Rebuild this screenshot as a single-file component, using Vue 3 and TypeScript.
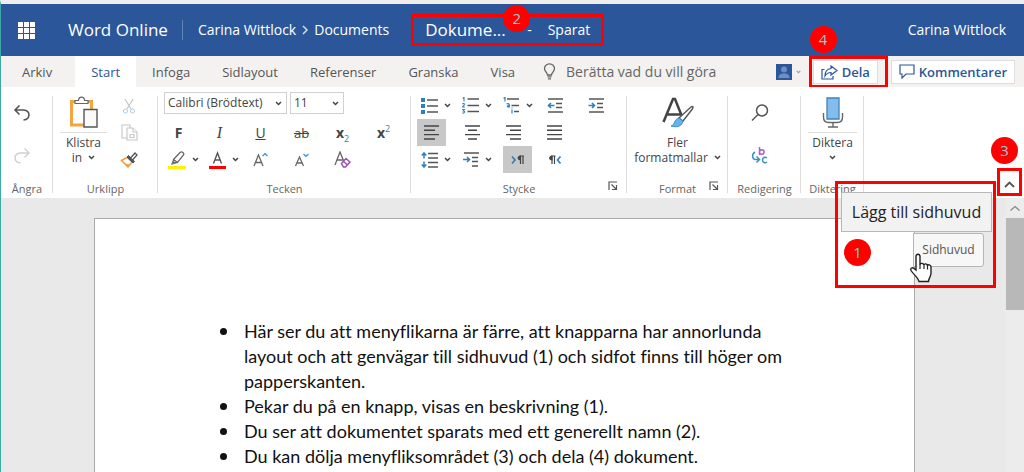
<script setup lang="ts">
import { ref } from 'vue'

const tabs: string[] = ['Start', 'Infoga', 'Sidlayout', 'Referenser', 'Granska', 'Visa']
const activeTab = ref('Start')
const font = ref('Calibri (Brödtext)')
const size = ref('11')
const query = ref('')

const waffle: number[] = [0, 6, 12]

const notes: string[][] = [
  [
    'Här ser du att menyflikarna är färre, att knapparna har annorlunda',
    'layout och att genvägar till sidhuvud (1) och sidfot finns till höger om',
    'papperskanten.',
  ],
  ['Pekar du på en knapp, visas en beskrivning (1).'],
  ['Du ser att dokumentet sparats med ett generellt namn (2).'],
  ['Du kan dölja menyfliksområdet (3) och dela (4) dokument.'],
]
</script>

<template>
  <div class="app">
    <svg class="defs" aria-hidden="true">
      <symbol id="caret" viewBox="0 0 7 5"><path d="M1 1l2.5 2.5L6 1" fill="none" stroke="#444" stroke-width="1.5" /></symbol>
      <symbol id="launcher" viewBox="0 0 10 10">
        <path d="M1 9V1h8M3.500 3.500l5 5M8.500 4v4.500H4" fill="none" stroke="#555" stroke-width="1.200" />
      </symbol>
    </svg>

    <header class="titlebar">
      <button class="waffle" aria-label="Appstartare">
        <svg width="17" height="17" viewBox="0 0 17 17" fill="#fff">
          <template v-for="y in waffle" :key="y">
            <rect v-for="x in waffle" :key="x" :x="x" :y="y" width="5" height="5" />
          </template>
        </svg>
      </button>
      <span class="brand">Word Online</span>
      <nav class="crumbs">
        <a href="#">Carina Wittlock</a>
        <svg width="6" height="10" viewBox="0 0 6 10"><path d="M1 1l4 4-4 4" fill="none" stroke="#d5deed" stroke-width="1.500" /></svg>
        <a href="#">Documents</a>
      </nav>
      <div class="docname">
        <span class="name">Dokume...</span>
        <span class="dash">-</span>
        <span>Sparat</span>
        <span class="badge b2">2</span>
      </div>
      <a href="#" class="user">Carina Wittlock</a>
    </header>

    <div class="tabs">
      <button class="tab file">Arkiv</button>
      <button
        v-for="t in tabs"
        :key="t"
        class="tab"
        :class="{ active: t === activeTab }"
        @click="activeTab = t"
      >{{ t }}</button>
      <label class="tell">
        <svg width="13" height="17" viewBox="0 0 13 17" fill="none" stroke="#666" stroke-width="1.300">
          <path d="M4.500 12C4.500 9.500 1.500 8.500 1.500 5.500a5 4.700 0 0 1 10 0C11.500 8.500 8.500 9.500 8.500 12z" />
          <path d="M4.500 13.800h4M5 15.800h3" />
        </svg>
        <input v-model="query" type="text" placeholder="Berätta vad du vill göra" aria-label="Berätta vad du vill göra" />
      </label>
      <button class="avatar" aria-label="Deltagare">
        <svg width="16" height="16" viewBox="0 0 16 16">
          <path fill="#2b579a" d="M0 0h16v16H0z" />
          <circle cx="8" cy="5.500" r="3" fill="#6d8ec2" />
          <path d="M2.500 14c0-3 1.500-4.500 5.500-4.500s5.500 1.500 5.500 4.500z" fill="#6d8ec2" />
        </svg>
        <svg class="caret pale" width="5" height="4"><use href="#caret" /></svg>
      </button>
      <div class="share">
        <button class="action">
          <svg width="17" height="15" viewBox="0 0 17 15" fill="none" stroke="#2b579a" stroke-width="1.200">
            <path d="M3.500 4.500H1v9.500h11v-3" />
            <path d="M10 1l6 4.500-6 4.500V7.500C7 7.500 5.500 8.500 4 11c0-4 2-7 6-7.500z" />
          </svg>
          Dela
        </button>
        <span class="badge b4">4</span>
      </div>
      <button class="action comments">
        <svg width="16" height="15" viewBox="0 0 16 15" fill="none" stroke="#2b579a" stroke-width="1.200">
          <path d="M1 1h14v9H7l-4 4v-4H1z" />
        </svg>
        Kommentarer
      </button>
    </div>

    <div class="ribbon">
      <section class="group undo">
        <div class="body stack">
          <button aria-label="Ångra">
            <svg width="18" height="18" viewBox="0 0 18 18" fill="none" stroke="#555" stroke-width="1.600"><path d="M6.500 1.500L2 6l4.500 4.500M2 6h8.500C18 6.500 17.500 15.500 10.500 16" /></svg>
          </button>
          <button aria-label="Gör om" disabled>
            <svg width="18" height="18" viewBox="0 0 18 18" fill="none" stroke="#cfcfcf" stroke-width="1.400"><path d="M11.500 1.500L16 6l-4.500 4.500M16 6H7.500C0 6.500.5 15.500 7.500 16" /></svg>
          </button>
        </div>
        <h2>Ångra</h2>
      </section>

      <section class="group clip">
        <div class="body">
          <button class="big">
            <svg width="30" height="33" viewBox="0 0 30 33" fill="none">
              <path d="M2.500 5.500h20V29h-20z" fill="#fff" stroke="#f2a63d" stroke-width="3" />
              <path d="M6 7.500V4.500h3.500C9.500 0 15.500 0 15.500 4.500H19v3z" fill="#fff" stroke="#666" stroke-width="1.200" />
              <path d="M15 13.500h13V31H15z" fill="#fafafa" stroke="#555" stroke-width="1.400" />
            </svg>
            <span class="ruled">Klistra</span>
            <span>in <svg class="caret" width="7" height="5"><use href="#caret" /></svg></span>
          </button>
          <div class="side">
            <button aria-label="Klipp ut" disabled>
              <svg width="14" height="16" viewBox="0 0 14 16" fill="none">
                <path d="M3 1l6 10M11 1L5 11" stroke="#c8c8c8" stroke-width="1.300" />
                <circle cx="3.500" cy="13" r="2" stroke="#a9cbea" /><circle cx="10.500" cy="13" r="2" stroke="#a9cbea" />
              </svg>
            </button>
            <button aria-label="Kopiera" disabled>
              <svg width="17" height="17" viewBox="0 0 17 17" fill="#fff" stroke="#c6c6c6" stroke-width="1.100">
                <path d="M1 1h8v13H1z" /><path d="M6 4h6l4 4v8H6z" /><path d="M12 4v4h4M9 10.500h4v3H9z" />
              </svg>
            </button>
            <button aria-label="Hämta format">
              <svg width="18" height="16" viewBox="0 0 18 16" fill="none">
                <path d="M1.500 8.500l6.500 6.500 4-5-5-4.500z" fill="#fff" stroke="#eda03c" stroke-width="1.500" />
                <path d="M3.500 10.500l4.500 4.500 2-2.500-3.500-.5z" fill="#eda03c" />
                <path d="M7 5l1.500-1.500 6 6L13 11z" fill="#555" stroke="#555" />
                <path d="M10.500 6L15 1l2 2-4.500 5z" fill="#fff" stroke="#555" stroke-width="1.300" />
              </svg>
            </button>
          </div>
        </div>
        <h2>Urklipp</h2>
      </section>

      <section class="group font">
        <div class="body grid">
          <div class="selects">
            <label class="pick face">
              <select v-model="font" aria-label="Teckensnitt"><option>Calibri (Brödtext)</option><option>Arial</option></select>
              <svg class="caret" width="7" height="5"><use href="#caret" /></svg>
            </label>
            <label class="pick">
              <select v-model="size" aria-label="Teckenstorlek"><option>11</option><option>12</option></select>
              <svg class="caret" width="7" height="5"><use href="#caret" /></svg>
            </label>
          </div>
          <button class="cell ltr"><b>F</b></button>
          <button class="cell ltr serif"><i>I</i></button>
          <button class="cell ltr"><u>U</u></button>
          <button class="cell ltr strike"><s>ab</s></button>
          <button class="cell ltr"><span><b>x</b><sub>2</sub></span></button>
          <button class="cell ltr"><span><b>x</b><sup>2</sup></span></button>
          <button class="cell" aria-label="Överstrykning">
            <svg width="18" height="18" viewBox="0 0 18 18" fill="none">
              <path d="M0 15h18v3H0z" fill="#fff200" />
              <path d="M5.500 8.500L12 1.500c2-1.500 4.500.5 3.500 2.500L9.500 11.500l-4 .5zM5.500 8.500l4 3" stroke="#666" stroke-width="1.300" />
              <path d="M4.500 9.500l3.500 3-5 1.500z" fill="#777" />
            </svg>
            <svg class="caret" width="7" height="5"><use href="#caret" /></svg>
          </button>
          <button class="cell" aria-label="Teckenfärg">
            <svg width="17" height="18" viewBox="0 0 17 18" fill="none">
              <path d="M0 15h17v3H0z" fill="#f00" />
              <path d="M4.500 12.500L8.500 2l4 10.500M6 9h5" stroke="#555" stroke-width="1.400" />
            </svg>
            <svg class="caret" width="7" height="5"><use href="#caret" /></svg>
          </button>
          <button class="cell" aria-label="Öka teckenstorlek">
            <svg width="15" height="16" viewBox="0 0 15 16" fill="none">
              <path d="M1 14L5.500 3l4.500 11M2.500 10.500h6" stroke="#666" stroke-width="1.300" />
              <path d="M9.500 4L12 1.800 14.500 4" stroke="#4a93cc" stroke-width="1.400" />
            </svg>
          </button>
          <button class="cell" aria-label="Minska teckenstorlek">
            <svg width="15" height="16" viewBox="0 0 15 16" fill="none">
              <path d="M1.500 14L5.500 5l4 9M3 11h5" stroke="#666" stroke-width="1.300" />
              <path d="M9.500 2L12 4.200 14.500 2" stroke="#4a93cc" stroke-width="1.400" />
            </svg>
          </button>
          <button class="cell" aria-label="Ta bort formatering">
            <svg width="17" height="17" viewBox="0 0 17 17" fill="none">
              <path d="M1 14L6 1l4.500 11M3 9h6" stroke="#666" stroke-width="1.300" />
              <path d="M7.500 12.500l4.500-5 4 3.500-4.500 5H9.500zM9.500 10.500l4 3.500" fill="#fff" stroke="#9a4fb5" stroke-width="1.500" />
            </svg>
          </button>
        </div>
        <h2>Tecken</h2>
      </section>

      <section class="group para">
        <div class="body grid">
          <button class="cell" aria-label="Punktlista">
            <svg width="17" height="16" viewBox="0 0 17 16">
              <path d="M0 0h4v4H0zM0 6h4v4H0zM0 12h4v4H0z" fill="#2e7fc1" />
              <path d="M6 2h11M6 8h11M6 14h11" stroke="#555" stroke-width="1.500" />
            </svg>
            <svg class="caret" width="7" height="5"><use href="#caret" /></svg>
          </button>
          <button class="cell" aria-label="Numrering">
            <svg width="17" height="17" viewBox="0 0 17 17" fill="none">
              <path d="M.8 1.200L2 .5v4M.3 7c1-1 2.500-.5 2 .8L.5 10h2.300M.3 12.500h2L1.300 14c2 0 1.500 2.500-1 2" stroke="#2e7fc1" stroke-width="1.100" />
              <path d="M5.500 2H17M5.500 8.500H17M5.500 14.500H17" stroke="#555" stroke-width="1.500" />
            </svg>
            <svg class="caret" width="7" height="5"><use href="#caret" /></svg>
          </button>
          <button class="cell" aria-label="Lista med flera nivåer">
            <svg width="17" height="17" viewBox="0 0 17 17" fill="none">
              <path d="M.5 1.200L2 .5v4M3.500 7c2.500-1 3 0 3 3-3 0-3-1.500 0-1.500M9 12.500v4M9 10.500v1" stroke="#2e7fc1" stroke-width="1.200" />
              <path d="M4 2h12M8.500 8.500H16M11 14.500h5" stroke="#555" stroke-width="1.500" />
            </svg>
            <svg class="caret" width="7" height="5"><use href="#caret" /></svg>
          </button>
          <button class="cell" aria-label="Minska indrag">
            <svg width="16" height="15" viewBox="0 0 16 15" fill="none">
              <path d="M1 1h15M9 5.500h6M9 9.500h6M1 14h15" stroke="#555" stroke-width="1.400" />
              <path d="M7.500 7.500H1.500M4 5L1.500 7.500 4 10" stroke="#2e7fc1" stroke-width="1.600" />
            </svg>
          </button>
          <button class="cell" aria-label="Öka indrag">
            <svg width="16" height="15" viewBox="0 0 16 15" fill="none">
              <path d="M1 1h15M9 5.500h6M9 9.500h6M1 14h15" stroke="#555" stroke-width="1.400" />
              <path d="M.5 7.500h6M4 5l2.500 2.500L4 10" stroke="#2e7fc1" stroke-width="1.600" />
            </svg>
          </button>
          <button class="cell first on" aria-label="Vänsterjustera" aria-pressed="true">
            <svg width="15" height="15" viewBox="0 0 15 15"><path d="M0 1h15M0 5.300h11M0 9.600h15M0 14h11" stroke="#444" stroke-width="1.400" /></svg>
          </button>
          <button class="cell" aria-label="Centrera">
            <svg width="15" height="15" viewBox="0 0 15 15"><path d="M0 1h15M3 5.300h9M0 9.600h15M3 14h9" stroke="#444" stroke-width="1.400" /></svg>
          </button>
          <button class="cell" aria-label="Högerjustera">
            <svg width="15" height="15" viewBox="0 0 15 15"><path d="M0 1h15M4 5.300h11M0 9.600h15M4 14h11" stroke="#444" stroke-width="1.400" /></svg>
          </button>
          <button class="cell" aria-label="Marginaljustera">
            <svg width="15" height="15" viewBox="0 0 15 15"><path d="M0 1h15M0 5.300h15M0 9.600h15M0 14h15" stroke="#444" stroke-width="1.400" /></svg>
          </button>
          <button class="cell first" aria-label="Radavstånd">
            <svg width="17" height="16" viewBox="0 0 17 16" fill="none">
              <path d="M7 1.500h10M7 6h10M7 10.500h10M7 15h10" stroke="#555" stroke-width="1.400" />
              <path d="M3 6.500V1M.7 3.500L3 1l2.300 2.500M3 9.500V15M.7 12.500L3 15l2.300-2.500" stroke="#2e7fc1" stroke-width="1.500" />
            </svg>
            <svg class="caret" width="7" height="5"><use href="#caret" /></svg>
          </button>
          <button class="cell" aria-label="Specialindrag">
            <svg width="16" height="15" viewBox="0 0 16 15" fill="none">
              <path d="M1 1h15M9 5.500h6M9 9.500h6M9 14h6" stroke="#555" stroke-width="1.400" />
              <path d="M0 7.500h6.500M4 5l2.500 2.500L4 10" stroke="#2e7fc1" stroke-width="1.600" />
            </svg>
            <svg class="caret" width="7" height="5"><use href="#caret" /></svg>
          </button>
          <button class="cell on ltrdir" aria-label="Vänster till höger" aria-pressed="true">
            <svg width="14" height="10" viewBox="0 0 14 10" fill="none">
              <path d="M1 1.500L4 5 1 8.500" stroke="#2e7fc1" stroke-width="1.700" />
              <path d="M9.500 1v8M12 1v8M8.500 1H13" stroke="#444" stroke-width="1.200" /><path d="M10 .5v5C5.500 5.500 5.500.5 10 .5z" fill="#444" />
            </svg>
          </button>
          <button class="cell" aria-label="Höger till vänster">
            <svg width="14" height="10" viewBox="0 0 14 10" fill="none">
              <path d="M12.500 1.500L9.500 5l3 3.500" stroke="#2e7fc1" stroke-width="1.700" />
              <path d="M4 1v8M6.500 1v8M3 1h4.500" stroke="#444" stroke-width="1.200" /><path d="M4.500.5v5C0 5.500 0 .5 4.500.5z" fill="#444" />
            </svg>
          </button>
        </div>
        <h2>Stycke</h2>
        <button class="launch" aria-label="Styckeinställningar"><svg width="10" height="10"><use href="#launcher" /></svg></button>
      </section>

      <section class="group style">
        <div class="body">
          <button class="big">
            <svg width="32" height="31" viewBox="0 0 32 31" fill="none">
              <path d="M1.500 25L11 2h2l8 20M5 17.500h13" stroke="#444" stroke-width="2.500" />
              <path d="M29 10c2.500-1.500 2.500.5 1 2.500L21 24l-4-3z" fill="#fff" stroke="#555" stroke-width="1.400" />
              <path d="M17 21l4 3c-1 6-7 6.500-12 5 4-1 3-7 8-8z" fill="#67b3e8" stroke="#3b8fcb" />
            </svg>
            <span>Fler</span>
            <span>formatmallar <svg class="caret" width="7" height="5"><use href="#caret" /></svg></span>
          </button>
        </div>
        <h2>Format</h2>
        <button class="launch" aria-label="Formatmallar"><svg width="10" height="10"><use href="#launcher" /></svg></button>
      </section>

      <section class="group edit">
        <div class="body stack">
          <button aria-label="Sök">
            <svg width="18" height="18" viewBox="0 0 18 18" fill="none" stroke="#555" stroke-width="1.500"><circle cx="11" cy="6.500" r="5.500" /><path d="M7 10.500L1 16.500" /></svg>
          </button>
          <button aria-label="Ersätt">
            <svg width="18" height="18" viewBox="0 0 18 18" fill="none">
              <path d="M8.500 0v8M8.500 5c0-3 4.500-3 4.500 0s-4.500 3-4.500 0" stroke="#b35cc4" stroke-width="1.500" />
              <path d="M16 11c-2-1.500-4.500-.5-4.500 2s2.500 3.500 4.500 2" stroke="#3b8fcb" stroke-width="1.500" />
              <path d="M4 5C.5 7 1 12.500 4.500 12.500H8M5.500 9.500l3 3-3 3" stroke="#3b8fcb" stroke-width="1.500" />
            </svg>
          </button>
        </div>
        <h2>Redigering</h2>
      </section>

      <section class="group dictate">
        <div class="body">
          <button class="big">
            <svg width="22" height="31" viewBox="0 0 22 31" fill="none">
              <path d="M1.500 16v4c0 4 2 5.500 5 5.500h9c3 0 5-1.500 5-5.500v-4M11 25.500V30M6 30h10" stroke="#666" stroke-width="1.400" />
              <path d="M5 1h12v21H5z" fill="#83bdec" stroke="#3f83bd" stroke-width="1.300" />
            </svg>
            <span class="ruled">Diktera</span>
            <span><svg class="caret" width="7" height="5"><use href="#caret" /></svg></span>
          </button>
        </div>
        <h2>Diktering</h2>
      </section>

      <div class="collapse">
        <button aria-label="Dölj menyfliksområdet">
          <svg width="11" height="7" viewBox="0 0 11 7"><path d="M1 6l4.500-4.500L10 6" fill="none" stroke="#555" stroke-width="1.800" /></svg>
        </button>
        <span class="badge b3">3</span>
      </div>
    </div>

    <div class="workspace">
      <main class="canvas">
        <article class="paper">
          <ul>
            <li v-for="(lines, i) in notes" :key="i">
              <template v-for="(line, n) in lines" :key="n"><br v-if="n > 0" />{{ line }}</template>
            </li>
          </ul>
        </article>
        <button class="headerlink">Sidhuvud</button>
        <div class="callout">
          <div class="tip" role="tooltip">Lägg till sidhuvud</div>
          <span class="badge b1">1</span>
        </div>
        <svg class="hand" width="24" height="30" viewBox="0 0 24 30">
          <path d="M7 17V3.500C7 .5 11 .5 11 3.500V12c0-2.500 4-2 4 .5 0-2.500 3.500-2 3.500.5 0-2 3.500-1.500 3.500 1V20c0 4-2.500 5-2.500 8.500H10C9.500 25 4 21 2 17.500 1 15 3.500 14 5 15.500z" fill="#fff" stroke="#222" stroke-width="1.400" />
          <path d="M11 12v4M15 12.500V16M18.500 13v3.500" stroke="#222" stroke-width="1.200" />
        </svg>
      </main>
      <div class="scroll">
        <button aria-label="Rulla upp"><svg width="10" height="6" viewBox="0 0 10 6"><path d="M.5 5.500l4.500-4 4.500 4" fill="none" stroke="#888" stroke-width="1.200" /></svg></button>
        <div class="thumb"></div>
      </div>
    </div>
  </div>
</template>

<style>
html, body, #app { height: 100%; }
body { margin: 0; overflow: hidden; }
</style>

<style scoped>
* { box-sizing: border-box; }
.app {
  display: flex;
  flex-direction: column;
  height: 100%;
  border-left: 1px solid #3fa9a5;
  border-top: 4px solid #f0eeec;
  background: #fff;
  color: #444;
  font: 13px/20px "Open Sans", "Noto Sans", sans-serif;
}
.defs { position: absolute; width: 0; height: 0; }
svg { display: block; flex: none; }
button {
  display: flex;
  align-items: center;
  justify-content: center;
  margin: 0;
  padding: 0;
  border: 0;
  background: none;
  color: inherit;
  font: inherit;
}
a { color: inherit; text-decoration: none; }

.titlebar {
  display: flex;
  align-items: center;
  flex: none;
  height: 52px;
  padding: 0 18px 0 17px;
  background: #2b579a;
  color: #fff;
  font-size: 14px;
}
.waffle { margin-right: 33px; }
.brand { padding-right: 14px; border-right: 1px solid #6283b6; font-size: 17px; white-space: nowrap; }
.crumbs { display: flex; align-items: center; gap: 6px; padding: 0 22px 0 15px; white-space: nowrap; }
.docname {
  position: relative;
  display: flex;
  align-items: center;
  width: 193px;
  height: 32px;
  padding: 0 11px;
  border: 3px solid #f00;
  white-space: nowrap;
}
.docname .name { font-size: 17px; }
.docname .dash { margin: 0 16px 0 auto; }
.user { margin-left: auto; white-space: nowrap; }

.badge {
  position: absolute;
  width: 27px;
  height: 27px;
  border-radius: 50%;
  background: #f00;
  color: #8ccfca;
  font-size: 15px;
  line-height: 27px;
  text-align: center;
}
.b2 { left: 89px; top: -12px; }
.b4 { left: -2px; top: -33px; }
.b3 { right: 1px; top: -34px; }
.b1 { left: 6px; top: 55px; }

.tabs { display: flex; align-items: stretch; flex: none; height: 31px; padding-right: 9px; background: #f3f2f1; }
.tab { padding: 0 16px; color: #555; white-space: nowrap; }
.file { margin-right: 7px; padding-left: 21px; }
.active { background: #fff; color: #2b579a; }
.tell { display: flex; align-items: center; flex: 1; gap: 10px; min-width: 0; padding-left: 12px; }
.tell input { flex: 1; min-width: 0; padding: 0; border: 0; outline: 0; background: none; color: #666; font-family: inherit; font-size: 14px; }
.tell input::placeholder { color: #666; opacity: 1; }
.avatar { gap: 4px; margin-right: 8px; }
.pale { opacity: 0.5; }
.share { position: relative; display: flex; align-items: center; margin-bottom: -1px; padding: 0 7px 0 1px; border: 3px solid #f00; }
.action { gap: 4px; height: 24px; padding: 0 7px; border: 1px solid #dedede; background: #fff; color: #2b579a; font-weight: 600; }
.comments { align-self: center; margin-left: 3px; }

.ribbon { position: relative; display: flex; flex: none; padding-top: 5px; background: #fff; }
.group { position: relative; display: flex; flex-direction: column; flex: none; }
.group::after { content: ""; position: absolute; right: 0; top: 4px; bottom: 5px; border-right: 1px solid #dcdcdc; }
.group h2 { margin: 0 0 1px; font-size: 11px; font-weight: 400; line-height: 16px; text-align: center; color: #666; }
.body { display: flex; height: 85px; margin-bottom: 4px; font-size: 12px; }
.undo { width: 52px; }
.clip { width: 105px; }
.font { width: 253px; }
.para { width: 216px; }
.style { width: 101px; }
.edit { width: 73px; }
.dictate { width: 63px; }
.stack { flex-direction: column; }
.stack button { flex: 1; padding-right: 10px; }
.big { flex-direction: column; justify-content: flex-start; flex: 1; padding: 4px 7px 0; line-height: 15px; white-space: nowrap; }
.big > svg { height: 33px; margin-bottom: 6px; }
.big span { display: flex; align-items: center; justify-content: center; gap: 6px; min-height: 15px; }
.big .ruled { position: relative; align-self: stretch; }
.ruled::before { content: ""; position: absolute; left: 0; right: 0; top: -3px; border-top: 1px solid #ddd; }
.side { display: flex; flex-direction: column; width: 44px; padding: 0 14px 4px 0; }
.side button { flex: 1; }
.style .big { padding: 4px 0 0; }

.grid { display: grid; grid-template-rows: 27px 27px 27px; align-content: start; }
.font .grid { grid-template-columns: repeat(6, 41px); }
.para .grid { grid-template-columns: repeat(5, 41px); }
.selects { display: flex; align-items: flex-start; grid-column: 1 / -1; gap: 3px; padding-left: 6px; }
.pick { display: grid; align-items: center; width: 54px; height: 22px; border: 1px solid #d0d0d0; }
.face { width: 123px; }
.pick select { grid-area: 1 / 1; width: 100%; height: 20px; padding: 0 3px; border: 0; appearance: none; background: none; color: #444; font: 12px/20px "Open Sans", sans-serif; }
.pick svg { grid-area: 1 / 1; justify-self: end; margin-right: 4px; pointer-events: none; }
.cell { gap: 6px; }
.cell:has(.caret) { padding-left: 9px; }
.cell.first { grid-column: 1; }
.on { width: 29px; margin-left: 6px; background: #c8c8c8; }
.ltrdir { margin-left: 10px; }
.ltr { font-size: 14px; }
.ltr sub, .ltr sup { color: #2e7fc1; font-size: 9px; line-height: 0; }
.serif { font-family: "Liberation Serif", serif; font-size: 16px; }
.strike { font-size: 13px; }
.launch { position: absolute; right: 9px; bottom: 7px; }

.collapse { position: absolute; right: 2px; bottom: 2px; width: 25px; height: 28px; border: 3px solid #f00; }
.collapse button { width: 100%; height: 100%; padding-top: 4px; }

.workspace { display: flex; flex: 1; min-height: 0; background: #e9e9e9; }
.canvas { position: relative; flex: 1; padding: 20px 91px 0 93px; }
.paper { height: 100%; border: 1px solid #aaa; border-bottom: 0; background: #fff; color: #111; font: 18px/25px Lato, sans-serif; font-variant-ligatures: none; }
.paper ul { margin: 0; padding: 100px 0 0 149px; list-style: none; white-space: nowrap; }
.paper li { position: relative; }
.paper li::before { content: ""; position: absolute; left: -24px; top: 9px; width: 7px; height: 7px; border-radius: 50%; background: #111; }
.headerlink { position: absolute; right: 22px; top: 35px; width: 71px; height: 34px; border: 1px solid #b5b5b5; border-radius: 0 3px 3px 0; background: #f7f7f7; color: #555; font-size: 12px; }
.callout { position: absolute; right: 10px; top: -17px; width: 161px; height: 107px; padding: 8px 1px 0 3px; border: 3px solid #f00; }
.tip { height: 40px; border: 1px solid #b8b8b8; background: #f2f2f2; color: #222; font-size: 16px; line-height: 38px; text-align: center; white-space: nowrap; }
.hand { position: absolute; right: 73px; top: 55px; }
.scroll { display: flex; flex-direction: column; flex: none; width: 18px; background: #ececec; }
.scroll button { height: 20px; }
.thumb { height: 92px; background: #b8b8b8; }
</style>
